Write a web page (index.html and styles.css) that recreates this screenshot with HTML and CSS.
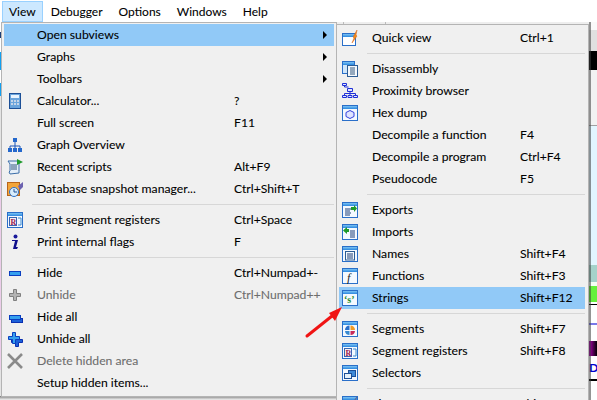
FILE: index.html
```html
<!DOCTYPE html>
<html lang="en">

<head>
    <meta charset="UTF-8">
    <title>View menu</title>
    <link rel="stylesheet" href="styles.css">
</head>

<body>
    <svg width="0" height="0" class="defs">
        <defs>
            <linearGradient id="bar" x1="0" y1="0" x2="0" y2="1">
                <stop offset="0" stop-color="#7cc4f4"/>
                <stop offset="1" stop-color="#2a86de"/>
            </linearGradient>
            <symbol id="win" viewBox="0 0 16 16">
                <rect x="0.5" y="0.5" width="15" height="15" fill="#f4f9ff" stroke="#2a6fc9"/>
                <rect x="1" y="1" width="14" height="3" fill="url(#bar)"/>
            </symbol>
        </defs>
    </svg>

    <nav class="menubar">
        <span class="top top-on">View</span>
        <span class="top">Debugger</span>
        <span class="top">Options</span>
        <span class="top">Windows</span>
        <span class="top">Help</span>
    </nav>

    <!-- bits of the app behind the menus -->
    <div class="behind-left"></div>
    <div class="behind-top"></div>
    <div class="behind-bottom"></div>
    <div class="behind-right">
        <div class="s1"></div>
        <div class="s2"></div>
        <div class="s3"></div>
        <div class="s4"></div>
        <div class="s5"></div>
        <div class="s6"></div>
        <div class="s7"></div>
        <div class="s8"></div>
        <div class="s9"></div>
        <div class="s10">Dr</div>
        <div class="s11"></div>
    </div>

    <div class="menu main-menu">
        <div class="row on"><span class="ic"></span><span class="lb">Open subviews</span><span class="sc"></span><span class="ar"></span></div>
        <div class="row"><span class="ic"></span><span class="lb">Graphs</span><span class="sc"></span><span class="ar"></span></div>
        <div class="row"><span class="ic"></span><span class="lb">Toolbars</span><span class="sc"></span><span class="ar"></span></div>
        <div class="row">
            <span class="ic"><svg viewBox="0 0 16 16"><rect x="2.5" y="0.5" width="11" height="15" fill="#6aa4dc" stroke="#1c4f96"/><rect x="4" y="2" width="8" height="3" fill="#e8f4ff"/><path d="M4 7h2v2H4zM7 7h2v2H7zM10 7h2v2h-2zM4 10h2v2H4zM7 10h2v2H7zM10 10h2v2h-2z" fill="#c4d4e8"/></svg></span>
            <span class="lb">Calculator...</span><span class="sc">?</span><span class="ar"></span>
        </div>
        <div class="row"><span class="ic"></span><span class="lb">Full screen</span><span class="sc">F11</span><span class="ar"></span></div>
        <div class="row">
            <span class="ic"><svg viewBox="0 0 16 16"><path d="M8 5v4M3 11V9h10v2M8 9v2" fill="none" stroke="#1c56b8"/><path d="M6 1h4v4H6zM1 11h4v4H1zM6 11h4v4H6zM11 11h4v4h-4z" fill="#2468cc"/></svg></span>
            <span class="lb">Graph Overview</span><span class="ar"></span>
        </div>
        <div class="row">
            <span class="ic"><svg viewBox="0 0 16 16"><path d="M1 2h10l1 2v10l-9 1-1-2 1-1V5z" fill="#e4eef8" stroke="#3c6ea8"/><path d="M4 6h6M4 8h6M4 10h6" stroke="#34597f"/><path d="M10 0l6 3-6 3z" fill="#1f9a2c"/></svg></span>
            <span class="lb">Recent scripts</span><span class="sc">Alt+F9</span><span class="ar"></span>
        </div>
        <div class="row">
            <span class="ic"><svg viewBox="0 0 16 16"><rect x="0.5" y="1.5" width="12" height="13" fill="#f2a53a" stroke="#b8651a"/><path d="M11 5l5-4v5l-3 3z" fill="#6c62b0"/><circle cx="7" cy="11" r="4.5" fill="#d8ecfb" stroke="#2a6fc9"/><path d="M7 8v3h3" fill="none" stroke="#1c4f96"/></svg></span>
            <span class="lb">Database snapshot manager...</span><span class="sc">Ctrl+Shift+T</span><span class="ar"></span>
        </div>
        <div class="sep"></div>
        <div class="row">
            <span class="ic"><svg viewBox="0 0 16 16"><use href="#win"/><rect x="2.5" y="5.5" width="7" height="8" fill="#f4f0f4" stroke="#3a66b0"/><text x="3.6" y="12.5" class="ic-text seg-r">R</text><path d="M11 6h3v7h-3" fill="none" stroke="#3a8ad0"/></svg></span>
            <span class="lb">Print segment registers</span><span class="sc">Ctrl+Space</span><span class="ar"></span>
        </div>
        <div class="row">
            <span class="ic"><svg viewBox="0 0 16 16"><circle cx="8.5" cy="2.5" r="2" fill="#1a1a9a"/><path d="M5 6h6l-2 7h2l-1 2H6l2-8H5z" fill="#10108c"/></svg></span>
            <span class="lb">Print internal flags</span><span class="sc">F</span><span class="ar"></span>
        </div>
        <div class="sep"></div>
        <div class="row">
            <span class="ic"><svg viewBox="0 0 16 16"><rect x="2.5" y="6.5" width="11" height="4" fill="#35a0ee" stroke="#0a3fc0"/></svg></span>
            <span class="lb">Hide</span><span class="sc">Ctrl+Numpad+-</span><span class="ar"></span>
        </div>
        <div class="row off">
            <span class="ic"><svg viewBox="0 0 16 16"><path d="M6.5 2.5h3v4h4v3h-4v4h-3v-4h-4v-3h4z" fill="#b4b4b4" stroke="#808080"/></svg></span>
            <span class="lb">Unhide</span><span class="sc">Ctrl+Numpad++</span><span class="ar"></span>
        </div>
        <div class="row">
            <span class="ic"><svg viewBox="0 0 16 16"><rect x="4.5" y="9.5" width="11" height="4" fill="#1c60d8" stroke="#0a2fb0"/><rect x="2.5" y="6.5" width="11" height="4" fill="#35a0ee" stroke="#0a3fc0"/></svg></span>
            <span class="lb">Hide all</span><span class="ar"></span>
        </div>
        <div class="row">
            <span class="ic"><svg viewBox="0 0 16 16"><path d="M8.5 5.5h3v3h4v3h-4v4h-3v-4h-4v-3h4z" fill="#1c60d8" stroke="#0a2fb0"/><path d="M5.5 1.5h3v4h4v3h-4v4h-3v-4h-4v-3h4z" fill="#35a0ee" stroke="#0a3fc0"/></svg></span>
            <span class="lb">Unhide all</span><span class="ar"></span>
        </div>
        <div class="row off">
            <span class="ic"><svg viewBox="0 0 16 16"><path d="M1 1l14 14M15 1L1 15" stroke="#8a8a8a" stroke-width="2.6"/></svg></span>
            <span class="lb">Delete hidden area</span><span class="ar"></span>
        </div>
        <div class="row"><span class="ic"></span><span class="lb">Setup hidden items...</span><span class="ar"></span></div>
    </div>

    <div class="menu sub-menu">
        <div class="row">
            <span class="ic"><svg viewBox="0 0 16 16"><rect x="0.5" y="3.5" width="13" height="12" fill="#fff" stroke="#2a6fc9"/><rect x="1" y="4" width="12" height="3" fill="url(#bar)"/><path d="M15 0l-4 7 1 1-2 5 5-7-1-1z" fill="#f08a1c" stroke="#d9651a" stroke-width="0.5"/></svg></span>
            <span class="lb">Quick view</span><span class="sc">Ctrl+1</span>
        </div>
        <div class="sep"></div>
        <div class="row">
            <span class="ic"><svg viewBox="0 0 16 16"><rect x="0.5" y="0.5" width="12" height="12" fill="#cfe6fa" stroke="#2a6fc9"/><rect x="1" y="1" width="11" height="3" fill="url(#bar)"/><rect x="5.5" y="4.5" width="10" height="11" fill="#f4f8fc" stroke="#2c5c94"/><path d="M8 7h5M8 9h5M8 11h5M8 13h5" stroke="#34597f"/></svg></span>
            <span class="lb">Disassembly</span>
        </div>
        <div class="row">
            <span class="ic"><svg viewBox="0 0 16 16"><path d="M0.5 0.5h4v2h-4zM5.5 5.5h5v3h-5zM0.5 12.5h4v2h-4zM6 12.5h4v2H6zM11.5 12.5h4v2h-4z" fill="#dfe6ff" stroke="#1e2fd8"/><path d="M2.5 2.5V4h4M8 8.5v4M2.5 12.5v-2h11v2" fill="none" stroke="#1e2fd8"/></svg></span>
            <span class="lb">Proximity browser</span>
        </div>
        <div class="row">
            <span class="ic"><svg viewBox="0 0 16 16"><use href="#win"/><path d="M8 5.5l4 2v4l-4 2-4-2v-4z" fill="#dfe4ff" stroke="#3240dc"/></svg></span>
            <span class="lb">Hex dump</span>
        </div>
        <div class="row"><span class="ic"></span><span class="lb">Decompile a function</span><span class="sc">F4</span></div>
        <div class="row"><span class="ic"></span><span class="lb">Decompile a program</span><span class="sc">Ctrl+F4</span></div>
        <div class="row"><span class="ic"></span><span class="lb">Pseudocode</span><span class="sc">F5</span></div>
        <div class="sep"></div>
        <div class="row">
            <span class="ic"><svg viewBox="0 0 16 16"><use href="#win"/><path d="M3 7h6M3 9h5M3 11h6M3 13h5" stroke="#1c3f78"/><path d="M9 5h3V3l3 3.5L12 10V8H9z" fill="#1f9a2c"/></svg></span>
            <span class="lb">Exports</span>
        </div>
        <div class="row">
            <span class="ic"><svg viewBox="0 0 16 16"><use href="#win"/><path d="M8 7h5M8 9h5M8 11h5M8 13h5" stroke="#1c3f78"/><path d="M7 5H5V3L1 6.5 5 10V8h2z" fill="#1f9a2c"/></svg></span>
            <span class="lb">Imports</span>
        </div>
        <div class="row">
            <span class="ic"><svg viewBox="0 0 16 16"><use href="#win"/><rect x="3.5" y="5.5" width="9" height="8.5" fill="#f4f8fc" stroke="#2c5c94"/><path d="M5 8h6M5 10h6M5 12h6" stroke="#1c3f78"/></svg></span>
            <span class="lb">Names</span><span class="sc">Shift+F4</span>
        </div>
        <div class="row">
            <span class="ic"><svg viewBox="0 0 16 16"><use href="#win"/><text x="5" y="13.5" class="ic-text fn-f">f</text></svg></span>
            <span class="lb">Functions</span><span class="sc">Shift+F3</span>
        </div>
        <div class="row on">
            <span class="ic"><svg viewBox="0 0 16 16"><use href="#win"/><text x="2" y="13" class="ic-text str-s">‘s’</text></svg></span>
            <span class="lb">Strings</span><span class="sc">Shift+F12</span>
        </div>
        <div class="sep"></div>
        <div class="row">
            <span class="ic"><svg viewBox="0 0 16 16"><use href="#win"/><path d="M3 9a4.5 4.5 0 0 1 4.5-4.5V9z" fill="#2a6fc9"/><path d="M8.5 4.5A4.5 4.5 0 0 1 13 9H8.5z" fill="#f09a24"/><path d="M3 10h4.5v4A4.5 4.5 0 0 1 3 10z" fill="#3a8ad0"/><path d="M8.5 10H13a4.5 4.5 0 0 1-4.5 4z" fill="#c82a5a"/></svg></span>
            <span class="lb">Segments</span><span class="sc">Shift+F7</span>
        </div>
        <div class="row">
            <span class="ic"><svg viewBox="0 0 16 16"><use href="#win"/><rect x="2.5" y="5.5" width="7" height="8" fill="#f4f0f4" stroke="#3a66b0"/><text x="3.6" y="12.5" class="ic-text seg-r">R</text><path d="M11 6h3v7h-3" fill="none" stroke="#3a8ad0"/></svg></span>
            <span class="lb">Segment registers</span><span class="sc">Shift+F8</span>
        </div>
        <div class="row">
            <span class="ic"><svg viewBox="0 0 16 16"><use href="#win"/><rect x="6.5" y="5.5" width="7" height="6" fill="#3f8ad8" stroke="#1c4f96"/><rect x="2.5" y="8.5" width="7" height="5" fill="#e4f0fb" stroke="#1c4f96"/></svg></span>
            <span class="lb">Selectors</span>
        </div>
        <div class="sep"></div>
        <div class="row">
            <span class="ic"><svg viewBox="0 0 16 16"><use href="#win"/><path d="M15 0l-5 7 1 1 4-6z" fill="#5a6a9a"/></svg></span>
            <span class="lb">Signatures</span><span class="sc">Shift+F5</span>
        </div>
    </div>

    <svg class="red-arrow" viewBox="0 0 42 36" width="42" height="36">
        <path d="M4 32L29 12" stroke="#f01414" stroke-width="3" stroke-linecap="round"/>
        <path d="M39 3L26 9l6 8z" fill="#f01414"/>
    </svg>
</body>

</html>
```

FILE: styles.css
```css
html, body {
    margin: 0;
    height: 100%;
    overflow: hidden;
    background: #fff;
}

body {
    position: relative;
    font-family: Lato, "Open Sans", sans-serif;
    font-size: 12.2px;
    color: #000;
    -webkit-text-stroke: .08px;
}

.defs {
    position: absolute;
}

.menubar {
    display: flex;
    height: 22px;
    padding: 1px 0 0 2px;
    box-sizing: border-box;
    line-height: 19px;
    font-size: 12px;
}

.top {
    padding: 0 7px;
    border: 1px solid transparent;
}

.top-on {
    padding: 0 6px;
    background: #cce8ff;
    border-color: #99d1ff;
}

/* behind the menus */
.behind-left {
    position: absolute;
    left: 0;
    top: 22px;
    width: 2px;
    height: 378px;
    background: linear-gradient(#fff 0, #fff 10px, #1c3f78 10px, #1c3f78 16px, #fff 16px, #fff 30px, #12a0f0 30px, #12a0f0 48px, #fff 48px, #fff 61px, #12a0f0 61px, #12a0f0 74px, #e4e4e4 74px, #e4e4e4 144px, #eccdea 144px, #eccdea 348px, #e4e4e4 348px);
}

.behind-top {
    position: absolute;
    left: 337px;
    top: 22px;
    width: 260px;
    height: 2px;
    background: linear-gradient(90deg, #eee 6px, #bbb 6px, #bbb 7px, #eee 7px, #eee 48px, #bbb 48px, #bbb 49px, #eee 49px);
}

.behind-bottom {
    position: absolute;
    left: 0;
    top: 396px;
    width: 337px;
    height: 4px;
    background: linear-gradient(#777, #bbb 50%, #f0f0f0);
}

.behind-right {
    position: absolute;
    left: 589px;
    top: 22px;
    width: 8px;
    height: 378px;
    overflow: hidden;
    display: flex;
    flex-direction: column;
}

.behind-right::after {
    content: "";
    position: absolute;
    left: 0;
    top: 0;
    width: 2px;
    height: 100%;
    background: rgba(60, 60, 60, .55);
}

.s1 { height: 29px; flex: none; background: linear-gradient(#fafafa 8px, #e0e0e0 8px); }
.s2 { height: 19px; flex: none; background: #000; }
.s3 { height: 56px; flex: none; box-sizing: border-box; background: #f2f2f2; border-bottom: 1px solid #a0a0a0; }
.s4 { height: 139px; flex: none; background: #e2f6ff; }
.s5 { height: 21px; flex: none; box-sizing: border-box; background: #a4d2ca; border-bottom: 4px solid #f4fff4; }
.s6 { height: 18px; flex: none; box-sizing: border-box; background: #66f03c; border-bottom: 2px solid #fff; }
.s7 { height: 1px; flex: none; background: #000; }
.s8 { height: 20px; flex: none; box-sizing: border-box; background: #fff; border-bottom: 2px solid #7a78e8; }
.s9 { height: 15px; flex: none; margin-top: 16px; background: linear-gradient(90deg, #b000b0, #000); }
.s10 { height: 23px; flex: none; line-height: 23px; color: #0000d0; font-weight: 700; background: #fff; }
.s11 { height: 2px; flex: none; background: #000; }

/* menus */
.menu {
    position: absolute;
    background: #f0f0f0;
    border: 1px solid #b4b4b4;
    box-sizing: border-box;
}

.main-menu {
    left: 1px;
    top: 22px;
    width: 336px;
    height: 375px;
    padding: 1px 2px;
}

.sub-menu {
    left: 336px;
    top: 24px;
    width: 253px;
    padding: 2px 3px 0 2px;
}

.row {
    display: flex;
    align-items: center;
    height: 22px;
    white-space: nowrap;
}

.row.on {
    background: #91c9f7;
}

.row.off {
    color: #6d6d6d;
}

.lb, .sc {
    padding-bottom: 2px;
}

.ic {
    display: flex;
    align-items: center;
    box-sizing: border-box;
    width: 33px;
    padding-left: 3px;
    flex: none;
}

.ic svg {
    width: 16px;
    height: 16px;
}

.main-menu .lb {
    width: 197px;
}

.main-menu .sc {
    flex: 1;
}

.main-menu .ar {
    margin-left: auto;
    margin-right: 7px;
    width: 0;
    height: 0;
}

.main-menu .row:nth-child(-n+3) .ar {
    border-left: 4px solid #000;
    border-top: 4px solid transparent;
    border-bottom: 4px solid transparent;
}

.sub-menu .lb {
    width: 148px;
}

.sep {
    height: 1px;
    background: #d7d7d7;
    margin: 4px 0 4px 28px;
}

.ic-text {
    font-family: "Liberation Serif", serif;
}

.seg-r {
    font-size: 8px;
    font-weight: 700;
    fill: #9c1c50;
}

.fn-f {
    font-size: 12px;
    font-style: italic;
    fill: #222;
}

.str-s {
    font-size: 10px;
    font-weight: 700;
    fill: #1f8a2c;
}

.red-arrow {
    position: absolute;
    left: 303px;
    top: 304px;
}
```
